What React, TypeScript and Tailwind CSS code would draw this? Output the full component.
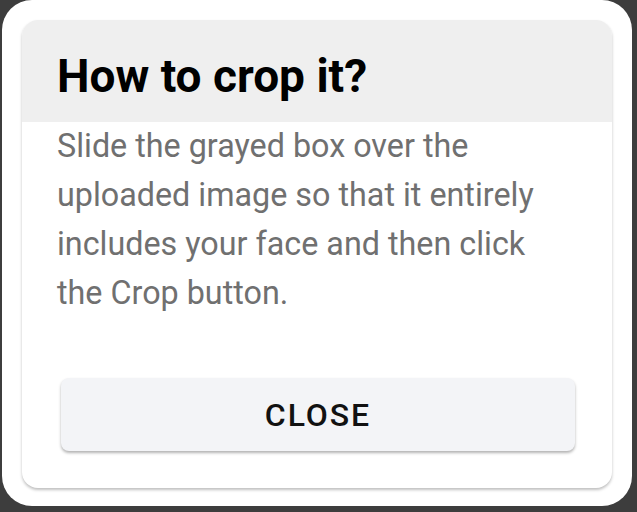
import React from 'react';

const App = () => {
    return (
        <div className="w-[637px] h-[512px] bg-[#3d3d3d] pl-[2px] overflow-hidden" style={{ fontFamily: 'Roboto, "Liberation Sans", sans-serif' }}>
            <div className="w-[630px] h-[506px] bg-white rounded-[30px] pt-[20px] px-[20px]">
                <div className="h-[468px] bg-white rounded-[16px] shadow-[0_2px_3px_rgba(0,0,0,0.25)] overflow-hidden flex flex-col">
                    <div className="h-[102px] bg-[#efefef] pt-[33px] pl-[35px]">
                        <h2 className="text-[46px] leading-none font-bold text-black">How to crop it?</h2>
                    </div>
                    <p className="pl-[35px] pr-[40px] text-[32.3px] leading-[49px] text-[#707070]">
                        Slide the grayed box over the uploaded image so that it entirely includes your face and then click the Crop button.
                    </p>
                    <button className="mt-[60px] ml-[39px] w-[514px] h-[73px] bg-[#f3f4f7] rounded-[8px] shadow-[0_2px_3px_rgba(0,0,0,0.3)] text-[32px] font-medium tracking-[0.06em] text-[#111]">
                        CLOSE
                    </button>
                </div>
            </div>
        </div>
    );
};

export default App;
